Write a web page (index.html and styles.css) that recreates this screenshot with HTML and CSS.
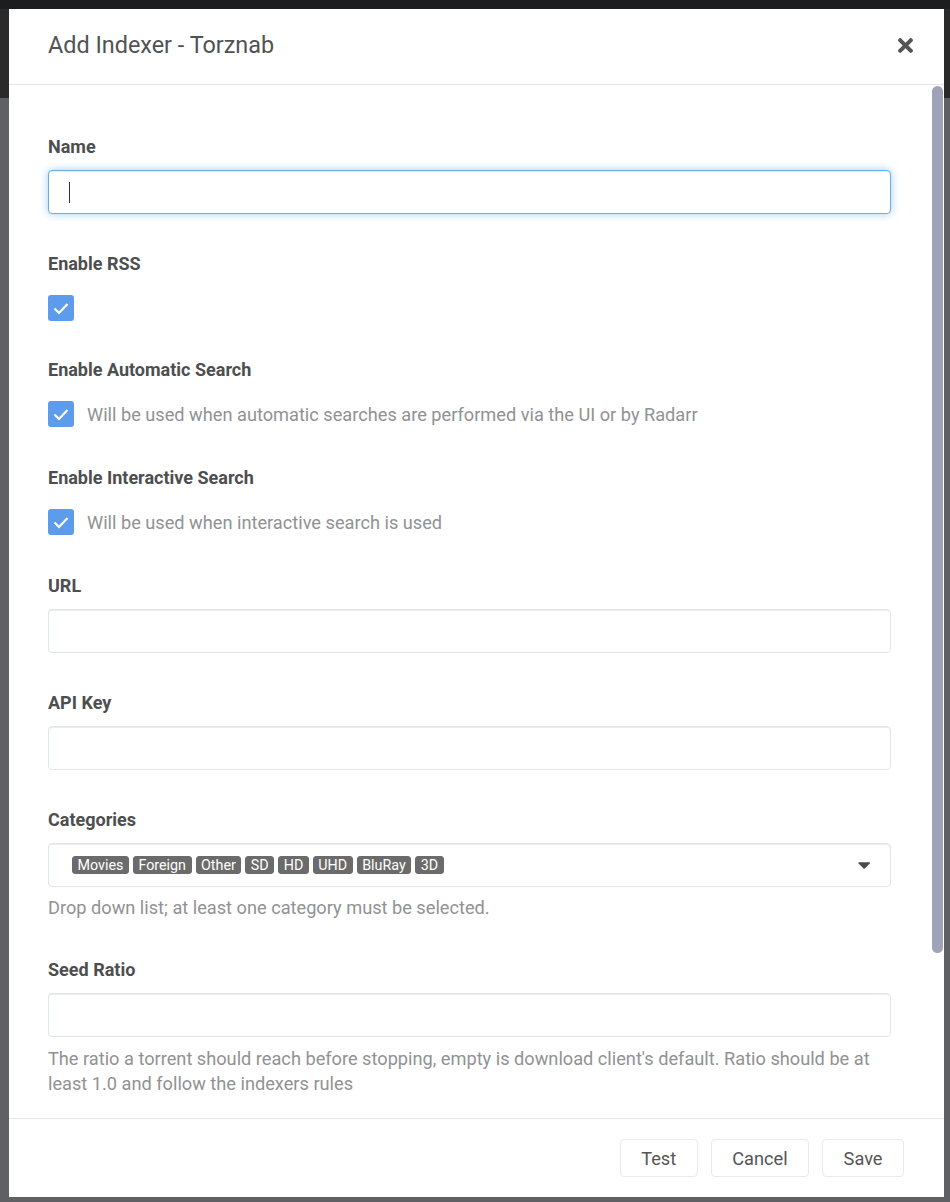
FILE: index.html
```html
<!DOCTYPE html>
<html lang="en">
<head>
<meta charset="utf-8">
<title>Add Indexer - Torznab</title>
<link rel="stylesheet" href="styles.css">
</head>
<body>
<div class="modal">
  <div class="modal-header">
    <h1 class="modal-title">Add Indexer - Torznab</h1>
    <button class="close-btn" aria-label="Close">
      <svg width="15" height="15" viewBox="0 80 352 352"><path fill="currentColor" d="M242.72 256l100.07-100.07c12.28-12.28 12.28-32.19 0-44.48l-22.24-22.24c-12.28-12.28-32.19-12.28-44.48 0L176 189.28 75.93 89.21c-12.28-12.28-32.19-12.280-44.48 0L9.21 111.45c-12.28 12.28-12.28 32.19 0 44.48L109.28 256 9.21 356.07c-12.28 12.28-12.28 32.19 0 44.48l22.24 22.24c12.28 12.28 32.2 12.28 44.48 0L176 322.72l100.07 100.07c12.28 12.28 32.2 12.28 44.48 0l22.24-22.24c12.28-12.28 12.28-32.19 0-44.48L242.72 256z"/></svg>
    </button>
  </div>

  <div class="modal-body">
    <div class="body-content">
      <div class="form-group">
        <label class="form-label">Name</label>
        <div class="text-input is-focused"><span class="caret"></span></div>
      </div>

      <div class="form-group check-group">
        <label class="form-label">Enable RSS</label>
        <div class="check-row">
          <span class="checkbox"><svg width="26" height="26" viewBox="0 0 26 26"><polyline points="6.5,13.5 11,18 19.5,9" fill="none" stroke="#fff" stroke-width="2.2"/></svg></span>
        </div>
      </div>

      <div class="form-group check-group has-help">
        <label class="form-label">Enable Automatic Search</label>
        <div class="check-row">
          <span class="checkbox"><svg width="26" height="26" viewBox="0 0 26 26"><polyline points="6.5,13.5 11,18 19.5,9" fill="none" stroke="#fff" stroke-width="2.2"/></svg></span>
          <span class="check-help">Will be used when automatic searches are performed via the UI or by Radarr</span>
        </div>
      </div>

      <div class="form-group check-group has-help">
        <label class="form-label">Enable Interactive Search</label>
        <div class="check-row">
          <span class="checkbox"><svg width="26" height="26" viewBox="0 0 26 26"><polyline points="6.5,13.5 11,18 19.5,9" fill="none" stroke="#fff" stroke-width="2.2"/></svg></span>
          <span class="check-help">Will be used when interactive search is used</span>
        </div>
      </div>

      <div class="form-group">
        <label class="form-label">URL</label>
        <input class="text-input" type="text">
      </div>

      <div class="form-group">
        <label class="form-label">API Key</label>
        <input class="text-input" type="text">
      </div>

      <div class="form-group">
        <label class="form-label">Categories</label>
        <div class="select-input">
          <div class="tags">
            <span class="tag">Movies</span>
            <span class="tag">Foreign</span>
            <span class="tag">Other</span>
            <span class="tag">SD</span>
            <span class="tag">HD</span>
            <span class="tag">UHD</span>
            <span class="tag">BluRay</span>
            <span class="tag">3D</span>
          </div>
          <svg class="dropdown-caret" width="12" height="7" viewBox="4 190 304 172"><path fill="currentColor" d="M31.3 192h257.3c17.8 0 26.7 21.5 14.1 34.1L174.1 354.8c-7.8 7.8-20.5 7.8-28.3 0L17.2 226.1C4.6 213.5 13.5 192 31.3 192z"/></svg>
        </div>
        <div class="help-text cat-help">Drop down list; at least one category must be selected.</div>
      </div>

      <div class="form-group">
        <label class="form-label">Seed Ratio</label>
        <input class="text-input" type="text">
        <div class="help-text">The ratio a torrent should reach before stopping, empty is download client's default. Ratio should be at least 1.0 and follow the indexers rules</div>
      </div>
    </div>

    <div class="scrollbar">
      <div class="scroll-thumb"></div>
    </div>
  </div>

  <div class="modal-footer">
    <button class="btn">Test</button>
    <button class="btn">Cancel</button>
    <button class="btn">Save</button>
  </div>
</div>
</body>
</html>
```

FILE: styles.css
```css
* {
  box-sizing: border-box;
}

html,
body {
  margin: 0;
  height: 100%;
}

body {
  font-family: Roboto, "Open Sans", "Liberation Sans", sans-serif;
  background: linear-gradient(to bottom, #1c1d1f 0, #1c1d1f 9px, #2a2a2b 9px, #2a2a2b 98px, #5f6063 98px);
  padding: 9px 6px 0 9px;
  overflow: hidden;
}

.modal {
  width: 935px;
  height: 1188px;
  background: #fff;
  display: flex;
  flex-direction: column;
}

.modal-header {
  flex: none;
  height: 76px;
  border-bottom: 1px solid #e5e5e5;
  display: flex;
  align-items: center;
  justify-content: space-between;
  padding: 0 31px 2px 39px;
}

.modal-title {
  margin: 0;
  font-size: 23.4px;
  font-weight: 400;
  line-height: 1;
  color: #515253;
}

.close-btn {
  background: none;
  border: 0;
  padding: 0;
  display: flex;
  color: #555;
  cursor: pointer;
}

.modal-body {
  flex: 1;
  min-height: 0;
  display: flex;
}

.body-content {
  flex: 1;
  min-width: 0;
  overflow: hidden;
  padding: 49px 39px 0;
}

.scrollbar {
  flex: none;
  width: 14px;
  padding: 1px 1px 0 2px;
}

.scroll-thumb {
  height: 867px;
  background: #9ea3b9;
  border-radius: 6px;
}

.form-group {
  margin-bottom: 37px;
}

.form-group.check-group {
  margin-bottom: 36px;
}

.form-group.has-help {
  margin-bottom: 38px;
}

.form-label {
  display: block;
  font-size: 18px;
  line-height: 25px;
  font-weight: 700;
  color: #4d4e4f;
  margin-bottom: 11px;
}

.text-input {
  display: block;
  width: 100%;
  height: 44px;
  border: 1px solid #dde6e9;
  border-radius: 4px;
  box-shadow: inset 0 1px 1px rgba(0, 0, 0, 0.075);
  padding: 0 20px;
  font: inherit;
  font-size: 18.2px;
  background: #fff;
  outline: none;
}

.text-input.is-focused {
  display: flex;
  align-items: center;
  border-color: #66afe9;
  box-shadow: inset 0 1px 1px rgba(0, 0, 0, 0.075), 0 0 8px rgba(102, 175, 233, 0.6);
}

.caret {
  width: 1px;
  height: 21px;
  background: #333;
}

.check-row {
  display: flex;
  align-items: center;
  gap: 13px;
  padding-top: 8px;
}

.checkbox {
  flex: none;
  width: 26px;
  height: 26px;
  border-radius: 3px;
  background: #5d9cec;
  display: flex;
}

.check-help,
.help-text {
  font-size: 18.2px;
  line-height: 25px;
  color: #909293;
}

.help-text {
  margin-top: 9px;
}

.help-text.cat-help {
  margin-top: 8px;
}

.select-input {
  display: flex;
  align-items: center;
  justify-content: space-between;
  height: 44px;
  border: 1px solid #dde6e9;
  border-radius: 4px;
  box-shadow: inset 0 1px 1px rgba(0, 0, 0, 0.075);
  padding: 0 20px 0 23px;
}

.tags {
  display: flex;
  gap: 4px;
}

.tag {
  background: #6b6b6b;
  color: #fff;
  border: 1px solid #6b6b6b;
  border-radius: 3px;
  font-size: 14.3px;
  line-height: 16px;
  padding: 0 4.5px;
}

.dropdown-caret {
  color: #4a4a4a;
}

.modal-footer {
  flex: none;
  height: 79px;
  border-top: 1px solid #e5e5e5;
  display: flex;
  justify-content: flex-end;
  align-items: center;
  gap: 13px;
  padding: 0 40px;
}

.btn {
  height: 38px;
  padding: 0 20.5px;
  border: 1px solid #eaeaea;
  border-radius: 4px;
  background: #fff;
  color: #555;
  font: inherit;
  font-size: 18.2px;
  cursor: pointer;
}
```
